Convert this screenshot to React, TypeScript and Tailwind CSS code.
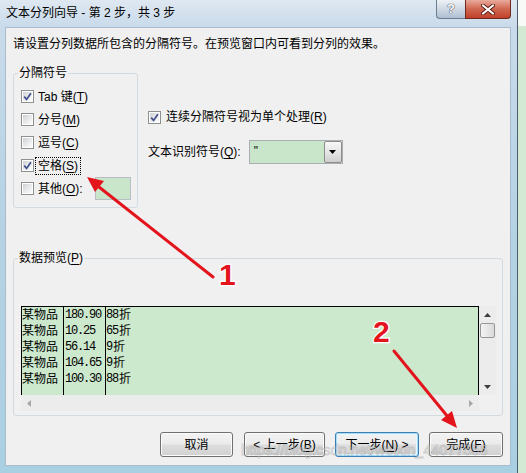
import React from 'react';

type Sep = { label: string; k: string; checked?: boolean; focus?: boolean };

const separators: Sep[] = [
  { label: 'Tab 键', k: 'T', checked: true },
  { label: '分号', k: 'M' },
  { label: '逗号', k: 'C' },
  { label: '空格', k: 'S', checked: true, focus: true },
];

const rows = [
  ['某物品', '180.90', '88', '折'],
  ['某物品', '10.25', '65', '折'],
  ['某物品', '56.14', '9', '折'],
  ['某物品', '104.65', '9', '折'],
  ['某物品', '100.30', '88', '折'],
];

const mono = "font-['Liberation_Mono',monospace] text-[12px] tracking-[-1.2px]";

const Key = ({ k }: { k: string }) => (
  <span className="underline decoration-1 underline-offset-[2px]">{k}</span>
);

const Box = ({ checked }: { checked?: boolean }) => (
  <span className="flex h-[13px] w-[13px] shrink-0 border border-[#8e8f8f] bg-white p-[1px]">
    <span className="flex flex-1 items-center justify-center bg-gradient-to-br from-[#cdd0d4] via-[#e8e9ea] to-[#fbfbfb]">
      {checked && (
        <svg width="9" height="9" viewBox="0 0 9 9">
          <path d="M1.2 4.6 L3.6 7.4 L7.9 1.3" fill="none" stroke="#404f8e" strokeWidth="1.7" />
        </svg>
      )}
    </span>
  </span>
);

const Button = ({ w, def, children }: { w: string; def?: boolean; children: React.ReactNode }) => (
  <div
    className={
      w +
      ' flex h-[25px] items-center justify-center rounded-[3px] border bg-[linear-gradient(#f3f3f3_0%,#ebebeb_48%,#dddddd_52%,#d1d1d1_100%)] ' +
      (def
        ? 'border-[#3c7fb1] shadow-[inset_0_0_0_1px_#a7dcf7,inset_0_0_0_2px_#eaf6fd]'
        : 'border-[#707070] shadow-[inset_0_0_0_1px_#fbfbfb]')
    }
  >
    {children}
  </div>
);

const Tri = ({ dir, color }: { dir: 'up' | 'down' | 'left' | 'right'; color: string }) => {
  const d = {
    up: 'M3.5 0 L7 4 L0 4 Z',
    down: 'M0 0 L7 0 L3.5 4 Z',
    left: 'M4 0 L4 7 L0 3.5 Z',
    right: 'M0 0 L4 3.5 L0 7 Z',
  }[dir];
  const vertical = dir === 'up' || dir === 'down';
  return (
    <svg width={vertical ? 7 : 4} height={vertical ? 4 : 7}>
      <path d={d} fill={color} />
    </svg>
  );
};

export default function App() {
  return (
    <div className="relative flex h-[473px] w-[526px] overflow-hidden font-['Liberation_Sans','Noto_Sans_CJK_SC',sans-serif] text-[12px] leading-[16px] text-black">
      {/* dialog window */}
      <div className="flex w-[518px] flex-col border-r border-[#4c5d6e] bg-[linear-gradient(to_bottom,#dfe8f1,#c9dbeb_26px,#b7d3e4_200px,#a9d0e2)]">
        {/* title bar */}
        <div className="flex h-[27px] shrink-0">
          <span className="pl-[6px] pt-[5px]">文本分列向导 - 第 2 步，共 3 步</span>
          <div className="ml-auto mr-[6px] flex h-[19px]">
            <div className="flex w-[29px] items-center justify-center rounded-bl-[4px] border border-r-0 border-t-0 border-[#6b7c90] bg-gradient-to-b from-[#eef2f6] via-[#cfd9e4] to-[#aebfd2] text-[13px] font-bold text-white [text-shadow:0_0_1px_#2b3540,0_0_1px_#2b3540]">
              ?
            </div>
            <div className="flex w-[46px] items-center justify-center rounded-br-[4px] border border-t-0 border-[#6e2a1f] bg-gradient-to-b from-[#e9aa9c] via-[#d06650] to-[#c0402a]">
              <svg width="14" height="11" viewBox="0 0 14 11">
                <path d="M2 1.5 L12 9.5 M12 1.5 L2 9.5" stroke="#5a1c12" strokeWidth="4" strokeLinecap="round" />
                <path d="M2 1.5 L12 9.5 M12 1.5 L2 9.5" stroke="#ffffff" strokeWidth="2.2" strokeLinecap="round" />
              </svg>
            </div>
          </div>
        </div>

        {/* client area */}
        <div className="mb-[7px] ml-[5px] mr-[6px] flex flex-1 flex-col border border-[#a9bccd] bg-[#f0f0f0] px-[7px] pt-[8px]">
          <p>请设置分列数据所包含的分隔符号。在预览窗口内可看到分列的效果。</p>

          <div className="mt-[13px] flex items-start">
            <fieldset className="w-[125px] rounded-[3px] border border-[#d3dbe1] pb-[7px] pl-[7px] pt-[4px]">
              <legend className="-ml-[3px] px-[1px]">分隔符号</legend>
              {separators.map((s) => (
                <div key={s.k} className="flex h-[23px] items-center">
                  <Box checked={s.checked} />
                  <span
                    className={
                      'ml-[1px] border px-[2px] ' +
                      (s.focus ? 'border-dotted border-black' : 'border-transparent')
                    }
                  >
                    {s.label}(<Key k={s.k} />)
                  </span>
                </div>
              ))}
              <div className="flex h-[23px] items-center">
                <Box />
                <span className="ml-[1px] border border-transparent px-[2px]">
                  其他(<Key k="O" />):
                </span>
                <span className="ml-[9px] h-[23px] w-[36px] border border-[#b9bec4] bg-[#c9e6ca]" />
              </div>
            </fieldset>

            <div className="ml-[10px] flex flex-col">
              <div className="mt-[44px] flex items-center gap-[5px]">
                <Box checked />
                <span>
                  连续分隔符号视为单个处理(<Key k="R" />)
                </span>
              </div>
              <div className="mt-[15px] flex items-center gap-[8px]">
                <span>
                  文本识别符号(<Key k="Q" />):
                </span>
                <div className="flex h-[24px] w-[94px] border border-[#abadb3] bg-[#c9e6ca]">
                  <span className="flex-1 pl-[4px] leading-[20px]">"</span>
                  <span className="flex w-[18px] items-center justify-center rounded-[2px] border border-[#8d8d8d] bg-gradient-to-b from-[#f7f7f7] via-[#e6e6e6] to-[#cfcfcf]">
                    <Tri dir="down" color="#000" />
                  </span>
                </div>
              </div>
            </div>
          </div>

          <fieldset className="mt-[42px] rounded-[3px] border border-[#d3dbe1] pb-[4px] pl-[7px] pr-[6px] pt-[40px]">
            <legend className="-ml-[3px] px-[1px]">
              数据预览(<Key k="P" />)
            </legend>
            <div className="flex flex-col">
              <div className="flex h-[89px]">
                <div className="flex flex-1 border-x border-t border-black bg-[#cce8cd]">
                  <div className="w-[42px] border-r border-black">
                    {rows.map((r, i) => (
                      <div key={i} className="flex h-[16px] items-center">
                        {r[0]}
                      </div>
                    ))}
                  </div>
                  <div className="w-[42px] border-r border-black pl-[1px]">
                    {rows.map((r, i) => (
                      <div key={i} className={mono + ' flex h-[16px] items-center'}>
                        {r[1]}
                      </div>
                    ))}
                  </div>
                  <div className="flex-1">
                    {rows.map((r, i) => (
                      <div key={i} className="flex h-[16px] items-center">
                        <span className={mono}>{r[2]}</span>
                        <span className="pl-[1px]">{r[3]}</span>
                      </div>
                    ))}
                  </div>
                </div>
                <div className="flex w-[17px] flex-col items-center bg-[#ececec]">
                  <div className="flex h-[17px] items-center justify-center">
                    <Tri dir="up" color="#3d3d3d" />
                  </div>
                  <div className="h-[15px] w-[15px] rounded-[2px] border border-[#979797] bg-gradient-to-r from-[#f3f3f3] to-[#dadada]" />
                  <div className="flex-1" />
                  <div className="flex h-[17px] items-center justify-center">
                    <Tri dir="down" color="#3d3d3d" />
                  </div>
                </div>
              </div>
              <div className="flex h-[16px] bg-[#ececec]">
                <div className="flex w-[16px] items-center justify-center">
                  <Tri dir="left" color="#a6a6a6" />
                </div>
                <div className="flex-1" />
                <div className="flex w-[17px] items-center justify-center">
                  <Tri dir="right" color="#a6a6a6" />
                </div>
                <div className="w-[17px] bg-[#f0f0f0]" />
              </div>
            </div>
          </fieldset>

          <div className="mt-[16px] flex justify-end gap-[10px]">
            <Button w="w-[73px] mr-[1px]">取消</Button>
            <Button w="w-[81px]">
              &lt; 上一步(<Key k="B" />)
            </Button>
            <Button w="w-[84px]" def>
              下一步(<Key k="N" />) &gt;
            </Button>
            <Button w="w-[74px]">
              完成(<Key k="F" />)
            </Button>
          </div>
        </div>
      </div>

      {/* sheet behind the dialog */}
      <div className="flex-1 bg-[linear-gradient(to_bottom,#f7faf7_0px,#f7faf7_26px,#d3e9d3_26px)]" />

      {/* annotations */}
      <svg className="pointer-events-none absolute left-0 top-0" width="526" height="473">
        <g stroke="#e3141c" strokeWidth="3" strokeLinecap="round">
          <line x1="213" y1="277" x2="99" y2="187" />
          <line x1="394" y1="351" x2="448" y2="417" />
        </g>
        <polygon points="87,177 104,181 95,192" fill="#e3141c" />
        <polygon points="457,428 441,420 452,411" fill="#e3141c" />
        <text x="219" y="285" fontSize="30" fontWeight="bold" fill="#e3141c" stroke="#fff" strokeWidth="2.5" paintOrder="stroke" fontFamily="Liberation Sans, sans-serif">
          1
        </text>
        <text x="373" y="342" fontSize="30" fontWeight="bold" fill="#e3141c" stroke="#fff" strokeWidth="2.5" paintOrder="stroke" fontFamily="Liberation Sans, sans-serif">
          2
        </text>
        <text x="241" y="455" fontSize="14.5" fill="rgba(255,255,255,0.45)" stroke="rgba(80,80,80,0.22)" strokeWidth="1" fontFamily="Liberation Sans, sans-serif">
          https://blog.csdn.net/weixin_44077556
        </text>
      </svg>
    </div>
  );
}
